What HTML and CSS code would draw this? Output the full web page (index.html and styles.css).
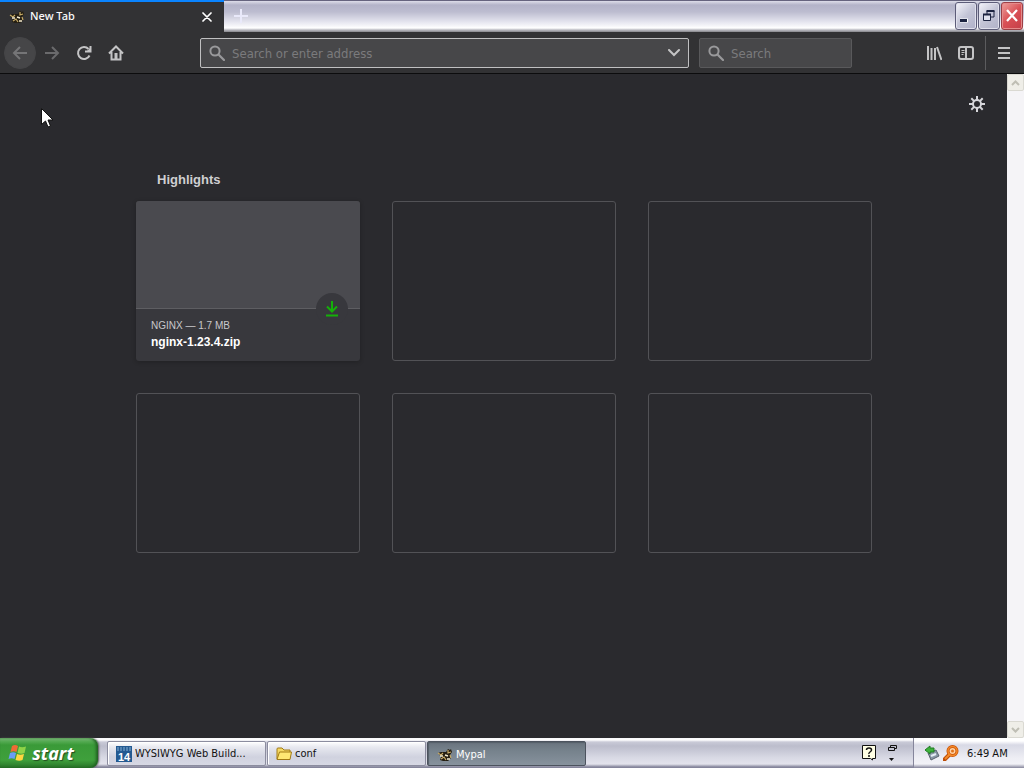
FILE: index.html
```html
<!DOCTYPE html>
<html lang="en">
<head>
    <meta charset="UTF-8">
    <title>New Tab</title>
    <link rel="stylesheet" href="styles.css">
</head>
<body>
    <svg class="symbols" aria-hidden="true">
        <symbol id="raccoon" viewBox="0 0 16 16">
            <path d="M1 6l3-1h5l2-3 2 1 1-1 1 3-2 3 1 3-3 3H6l-3-1 1-3z" fill="#241e12"/>
            <path d="M1 6l3 2 2-2M4 12l3-2 2 3M11 3v3l3-1M13 8l1 3" fill="none" stroke="#c8ac68" stroke-width="1.2"/>
            <path d="M3 9h3M8 8l3 1M10 12h3" stroke="#f6edcf" stroke-width="1.5"/>
        </symbol>
        <symbol id="magnifier" viewBox="0 0 16 16">
            <circle cx="6" cy="6" r="4.6" fill="none" stroke="currentColor" stroke-width="2"/>
            <path d="M9.5 9.5L15 15" stroke="currentColor" stroke-width="2.2" stroke-linecap="round"/>
        </symbol>
    </svg>

    <header class="titlebar">
        <div class="tab">
            <svg class="icon"><use href="#raccoon"/></svg>
            <span class="tab-title">New Tab</span>
            <button class="tab-close" aria-label="Close tab">
                <svg width="10" height="10" viewBox="0 0 10 10"><path d="M1 1l8 8M9 1l-8 8" stroke="#fff" stroke-width="1.7" stroke-linecap="round"/></svg>
            </button>
        </div>
        <button class="new-tab" aria-label="New tab">
            <svg width="14" height="14" viewBox="0 0 14 14"><path d="M7 0v14M0 7h14" stroke="#e9e9fa" stroke-width="2"/></svg>
        </button>
        <div class="window-buttons">
            <button aria-label="Minimize">
                <svg width="20" height="26" viewBox="0 0 20 26"><path d="M4 17.500h8" stroke="#fff" stroke-width="4"/><path d="M4 17.500h7" stroke="#1c2340" stroke-width="3"/></svg>
            </button>
            <button aria-label="Restore">
                <svg width="20" height="26" viewBox="0 0 20 26" fill="none"><path d="M8 11V8h7v6h-3" stroke="#1c2340"/><path d="M7.500 8h8" stroke="#1c2340" stroke-width="2"/><path d="M4.500 11.500h7v6h-7z" fill="#dfe1ee" stroke="#1c2340"/><path d="M4 11.500h8" stroke="#1c2340" stroke-width="2"/></svg>
            </button>
            <button class="close" aria-label="Close">
                <svg width="20" height="26" viewBox="0 0 20 26"><path d="M5 7l10 11M15 7L5 18" stroke="#fff" stroke-width="2.2"/></svg>
            </button>
        </div>
    </header>

    <nav class="toolbar">
        <div class="nav-buttons">
            <button class="back" aria-label="Back">
                <svg class="icon" viewBox="0 0 16 16"><path d="M15 8H2M8 2L2 8l6 6"/></svg>
            </button>
            <button class="forward" aria-label="Forward">
                <svg class="icon" viewBox="0 0 16 16"><path d="M1 8h13M8 2l6 6-6 6"/></svg>
            </button>
            <button aria-label="Reload">
                <svg class="icon" viewBox="0 0 16 16"><path d="M13.500 10.500a6 6 0 1 1-1-6.500M14.500 1v5.500H9"/><path d="M15 2v5H10z" fill="currentColor" stroke="none"/></svg>
            </button>
            <button aria-label="Home">
                <svg class="icon" viewBox="0 0 16 16"><path d="M1 8.500L8 1.500l7 7M3.500 7v7.500h9V7"/><path d="M8 8v6" stroke-width="3"/></svg>
            </button>
        </div>
        <div class="field address">
            <svg class="icon"><use href="#magnifier"/></svg>
            <input type="text" placeholder="Search or enter address" aria-label="Address">
            <button class="history" aria-label="Show history">
                <svg width="12" height="8" viewBox="0 0 12 8"><path d="M1 1l5 5 5-5" fill="none" stroke="#c4c4c5" stroke-width="2" stroke-linecap="round"/></svg>
            </button>
        </div>
        <div class="field search">
            <svg class="icon"><use href="#magnifier"/></svg>
            <input type="text" placeholder="Search" aria-label="Search">
        </div>
        <div class="tools">
            <button aria-label="Library">
                <svg class="icon" viewBox="0 0 16 16"><path d="M2 1v14M5.500 3v12M9 3v12M11 2l4.500 13"/></svg>
            </button>
            <button aria-label="Sidebars">
                <svg class="icon" viewBox="0 0 16 16"><rect x="1" y="2" width="14" height="12" rx="2"/><path d="M8 2v12"/><path d="M3.500 5.500h3M3.500 7.500h3M3.500 9.500h2" stroke-width="1"/></svg>
            </button>
        </div>
        <button class="menu" aria-label="Open menu">
            <svg class="icon" viewBox="0 0 16 16"><path d="M2 3h12M2 8h12M2 13h12"/></svg>
        </button>
    </nav>

    <div class="viewport">
        <main class="page">
            <button class="settings" aria-label="Customize page">
                <svg class="icon" viewBox="0 0 16 16"><circle cx="8" cy="8" r="4"/><path d="M8 0v4M8 12v4M0 8h4M12 8h4M2.300 2.300l2.800 2.800M10.900 10.900l2.800 2.800M13.700 2.300l-2.800 2.800M5.100 10.900l-2.800 2.800"/></svg>
            </button>
            <section class="highlights">
                <h1>Highlights</h1>
                <div class="cards">
                    <a class="card filled" href="#">
                        <div class="preview"></div>
                        <div class="badge">
                            <svg width="16" height="16" viewBox="0 0 16 16"><path d="M8 0v10M3 5.500l5 5 5-5M2 14.500h12" fill="none" stroke="#14b008" stroke-width="2"/></svg>
                        </div>
                        <div class="details">
                            <div class="host">NGINX — 1.7 MB</div>
                            <div class="name">nginx-1.23.4.zip</div>
                        </div>
                    </a>
                    <div class="card"></div>
                    <div class="card"></div>
                    <div class="card"></div>
                    <div class="card"></div>
                    <div class="card"></div>
                </div>
            </section>
            <svg class="pointer" width="12" height="20" viewBox="0 0 12 20"><path d="M.5.500v16l4-3.500 2.500 6 2.500-1-2.500-6h5z" fill="#fff" stroke="#111"/></svg>
        </main>
        <div class="scrollbar">
            <button aria-label="Scroll up"><svg width="9" height="6" viewBox="0 0 9 6"><path d="M1 5l3.500-3.500L8 5"/></svg></button>
            <button aria-label="Scroll down"><svg width="9" height="6" viewBox="0 0 9 6"><path d="M1 1l3.500 3.500L8 1"/></svg></button>
        </div>
    </div>

    <footer class="taskbar">
        <button class="start">
            <svg width="20" height="18" viewBox="0 0 20 18">
                <path d="M4 2q3-2 6 0L8.500 8q-3-1.500-6 0z" fill="#f06a35"/>
                <path d="M11 2.500q3 1.500 7 0L16.500 9q-3 1.500-7 0z" fill="#8fd348"/>
                <path d="M2 9q3-1.500 6 0L6.500 15q-3-1.500-6 0z" fill="#6a9df5"/>
                <path d="M9 10q3 1.500 7 0L14.500 16q-3 1.500-7 0z" fill="#ffd640"/>
            </svg>
            start
        </button>
        <div class="tasks">
            <button>
                <svg class="icon" viewBox="0 0 16 16"><rect width="16" height="16" fill="#245a91"/><path d="M1 2h14M1 4h14" stroke="#83aed5" stroke-dasharray="2 1"/><text x="8" y="15" text-anchor="middle" class="icon-number">14</text></svg>
                <span>WYSIWYG Web Build...</span>
            </button>
            <button>
                <svg class="icon" viewBox="0 0 16 16"><path d="M1 13V3q0-1 1-1h4l2 2h6v3" fill="#f5d964" stroke="#a17a14"/><path d="M1 13.500L3.500 6h12L14 13.500z" fill="#ffe873" stroke="#a17a14"/></svg>
                <span>conf</span>
            </button>
            <button class="active">
                <svg class="icon"><use href="#raccoon"/></svg>
                <span>Mypal</span>
            </button>
        </div>
        <div class="language-bar">
            <button aria-label="Help">
                <svg width="14" height="16" viewBox="0 0 14 16"><path d="M.5.500h13v13h-3V15l-2-1.500h-8z" fill="#ffffe4" stroke="#111"/><path d="M4.500 5q0-2 2.500-2t2.500 2q0 1-1.500 2T7 9M7 10v2" fill="none" stroke="#111" stroke-width="1.5"/></svg>
            </button>
            <button aria-label="Language bar options">
                <svg width="10" height="18" viewBox="0 0 10 18"><path d="M3.500 3.500v-2h6v3h-2M1.500 3.500h6v3h-6z" fill="none" stroke="#111"/><path d="M2 14h5l-2.500 3z" fill="#111"/></svg>
            </button>
        </div>
        <div class="tray">
            <svg class="icon" viewBox="0 0 16 16"><path d="M4 8l8-3 3 6-8 4z" fill="#8896a5" stroke="#59636e"/><path d="M7 11l5-2" stroke="#e4edf4" stroke-width="2"/><path d="M1 5l5-4v2h4v4H6v2z" fill="#3db33a" stroke="#207b25"/></svg>
            <svg class="icon" viewBox="0 0 16 16"><path d="M1.500 14.500L7 9" stroke="#bd4d08" stroke-width="4" stroke-linecap="round"/><circle cx="9.500" cy="6" r="4.500" fill="#ffd2a5" stroke="#c75208" stroke-width="3"/><path d="M2 14l5-5" stroke="#f58a27" stroke-width="2"/><circle cx="9.500" cy="6" r="4.500" fill="none" stroke="#f58a27" stroke-width="1.5"/><circle cx="9.500" cy="6" r="1.500" fill="#df721a"/></svg>
            <time>6:49 AM</time>
        </div>
    </footer>
</body>
</html>
```
FILE: styles.css
```css
* {
    margin: 0;
    padding: 0;
    box-sizing: border-box;
}

body {
    display: flex;
    flex-direction: column;
    height: 100vh;
    overflow: hidden;
    background: #2a2a2e;
    color: #f9f9fa;
    font-family: Tahoma, "DejaVu Sans Condensed", sans-serif;
    font-size: 11px;
}

button {
    display: flex;
    align-items: center;
    justify-content: center;
    flex-shrink: 0;
    border: none;
    background: none;
    color: inherit;
    font: inherit;
}

svg {
    display: block;
    flex-shrink: 0;
}

.symbols {
    position: absolute;
    width: 0;
    height: 0;
}

.icon {
    width: 16px;
    height: 16px;
}

/* Title bar */
.titlebar {
    display: flex;
    height: 32px;
    flex-shrink: 0;
    background: linear-gradient(#66647e 0, #66647e 1px, #dddde9 1px, #b3b3c8 5px, #bdbdd0 12px, #e5e5ef 22px, #fff 28px, #b9b9c0 30px, #858589 32px);
}

.tab {
    display: flex;
    align-items: center;
    width: 224px;
    padding: 0 8px 0 9px;
    border-top: 2px solid #0a84ff;
    background: #323234;
}

.tab-title {
    flex: 1;
    margin-left: 5px;
    font-family: "Noto Sans", sans-serif;
    font-weight: 500;
    line-height: 14px;
    padding-bottom: 2px;
}

.tab-close {
    width: 18px;
    height: 18px;
}

.new-tab {
    width: 34px;
}

.window-buttons {
    display: flex;
    gap: 1px;
    margin-left: auto;
    padding: 2px 1px 2px 0;
}

.window-buttons button {
    width: 22px;
    border: 1px solid #5c5c78;
    border-radius: 3px;
    background: linear-gradient(135deg, #f4f4fa, #c3c4d6 50%, #b0b1c8);
    box-shadow: inset 0 0 0 1px #e0e0ec;
}

.window-buttons .close {
    border-color: #9d4046;
    background: linear-gradient(135deg, #eda09c, #d95055 50%, #c53e48);
    box-shadow: inset 0 0 0 1px #e58b8b;
}

/* Navigation toolbar */
.toolbar {
    display: flex;
    align-items: center;
    height: 42px;
    flex-shrink: 0;
    padding: 0 3px 0 4px;
    border-bottom: 1px solid #0c0c0d;
    background: #323234;
    color: #c4c4c5;
}

.toolbar .icon {
    fill: none;
    stroke: currentColor;
    stroke-width: 2;
}

.nav-buttons {
    display: flex;
    width: 196px;
    flex-shrink: 0;
}

.nav-buttons button,
.tools button {
    width: 32px;
    height: 32px;
}

.nav-buttons .back {
    border: 1px solid #454547;
    border-radius: 50%;
    background: #464648;
    color: #757577;
}

.nav-buttons .forward {
    color: #6a6a6c;
}

.field {
    display: flex;
    align-items: center;
    height: 30px;
    padding-left: 8px;
    border: 1px solid #59595b;
    border-radius: 2px;
    background: #474749;
}

.field .icon {
    color: #99999b;
    stroke: none;
}

.field input {
    flex: 1;
    min-width: 0;
    height: 28px;
    padding: 1px 7px 0;
    border: none;
    outline: none;
    background: none;
    color: #f9f9fa;
    font-family: inherit;
    font-size: 13px;
}

.field input::placeholder {
    color: #7b7b7d;
}

.address {
    flex: 1;
    border-color: #c0c0c1;
}

.history {
    width: 28px;
    height: 28px;
}

.search {
    width: 153px;
    margin-left: 10px;
}

.tools {
    display: flex;
    margin-left: 66px;
}

.menu {
    width: 36px;
    height: 34px;
    margin-left: 3px;
    border-left: 1px solid #5c5c5e;
}

/* New tab page */
.viewport {
    display: flex;
    flex: 1;
    min-height: 0;
}

.page {
    position: relative;
    flex: 1;
    padding: 14px 0 0 1px;
    overflow: hidden;
}

.settings {
    width: 32px;
    height: 32px;
    margin: 0 14px 0 auto;
    color: #d7d7db;
}

.settings .icon {
    fill: none;
    stroke: currentColor;
    stroke-width: 2;
}

.highlights {
    max-width: 736px;
    margin: 51px auto 0;
}

.highlights h1 {
    padding-left: 21px;
    color: #cfcfd2;
    font: bold 13px/18px "Liberation Sans", sans-serif;
}

.cards {
    display: grid;
    grid-template-columns: repeat(3, 1fr);
    gap: 32px;
    margin-top: 12px;
}

.card {
    height: 160px;
    border: 1px solid #525256;
    border-radius: 3px;
}

.card.filled {
    position: relative;
    border: none;
    background: #38383d;
    box-shadow: 0 1px 4px rgba(12, 12, 13, 0.3);
    color: #fff;
    font-family: "Liberation Sans", sans-serif;
    text-decoration: none;
}

.preview {
    height: 108px;
    border-bottom: 1px solid #5e5e62;
    border-radius: 3px 3px 0 0;
    background: #4a4a4f;
}

.badge {
    position: absolute;
    top: 92px;
    right: 12px;
    display: flex;
    align-items: center;
    justify-content: center;
    width: 32px;
    height: 32px;
    border-radius: 50%;
    background: #38383d;
}

.details {
    padding: 9px 15px;
}

.host {
    color: #c8c8cb;
    font-size: 10px;
    line-height: 16px;
}

.name {
    font-size: 12px;
    font-weight: bold;
    line-height: 16px;
}

.pointer {
    position: absolute;
    top: 34px;
    left: 41px;
}

.scrollbar {
    display: flex;
    flex-direction: column;
    justify-content: space-between;
    width: 17px;
    background: #f5f4f7;
}

.scrollbar button {
    height: 17px;
    border: 1px solid #dad9d2;
    border-radius: 2px;
    background: #efeee8;
}

.scrollbar svg {
    fill: none;
    stroke: #bfbeb4;
    stroke-width: 2;
}

/* Taskbar */
.taskbar {
    display: flex;
    height: 30px;
    flex-shrink: 0;
    background: linear-gradient(#f8f8fb 0, #fff 2px, #c9cad7 4px, #bcbdcc 8px, #d9dae5 20px, #e3e3ec 26px, #85859b 29px);
    color: #111;
}

.start {
    gap: 4px;
    width: 98px;
    padding-right: 16px;
    border-radius: 0 8px 8px 0;
    background: linear-gradient(#8fca8d 0, #58ac56 3px, #3a9a38 7px, #3fa03c 22px, #277227 30px);
    box-shadow: inset -2px 0 3px #206020, 1px 0 2px #555;
    color: #fff;
    font: italic bold 18px "Noto Sans", sans-serif;
    text-shadow: 1px 1px 1px #234d20;
}

.tasks {
    display: flex;
    gap: 1px;
    flex: 1;
    min-width: 0;
    padding: 3px 0 2px 9px;
}

.tasks button {
    justify-content: flex-start;
    flex: 0 1 159px;
    gap: 3px;
    min-width: 0;
    padding: 0 8px;
    border: 1px solid #8c8d9f;
    border-radius: 2px;
    background: linear-gradient(#fff, #e8e9f0 5px, #d0d2df 15px, #d7d8e4);
    box-shadow: inset 1px 1px 0 #fff;
    white-space: nowrap;
}

.tasks .active {
    padding: 2px 9px 0;
    border-color: #4c535e;
    background: linear-gradient(#68727d, #75818b 8px, #87929d);
    box-shadow: inset 1px 1px 1px #555f69;
    color: #fff;
}

.icon-number {
    fill: #fff;
    font: bold 11px "Liberation Sans", sans-serif;
}

.language-bar {
    display: flex;
    align-items: center;
    gap: 11px;
    padding: 0 16px 0 10px;
}

.tray {
    display: flex;
    align-items: center;
    gap: 3px;
    width: 111px;
    padding-left: 10px;
    border-left: 1px solid #85859b;
    background: linear-gradient(#fff 0, #fff 3px, #d8d9e5 7px, #eeeef4 20px, #f2f2f7 26px, #85859b 30px);
}

.tray time {
    margin-left: 5px;
}
```
